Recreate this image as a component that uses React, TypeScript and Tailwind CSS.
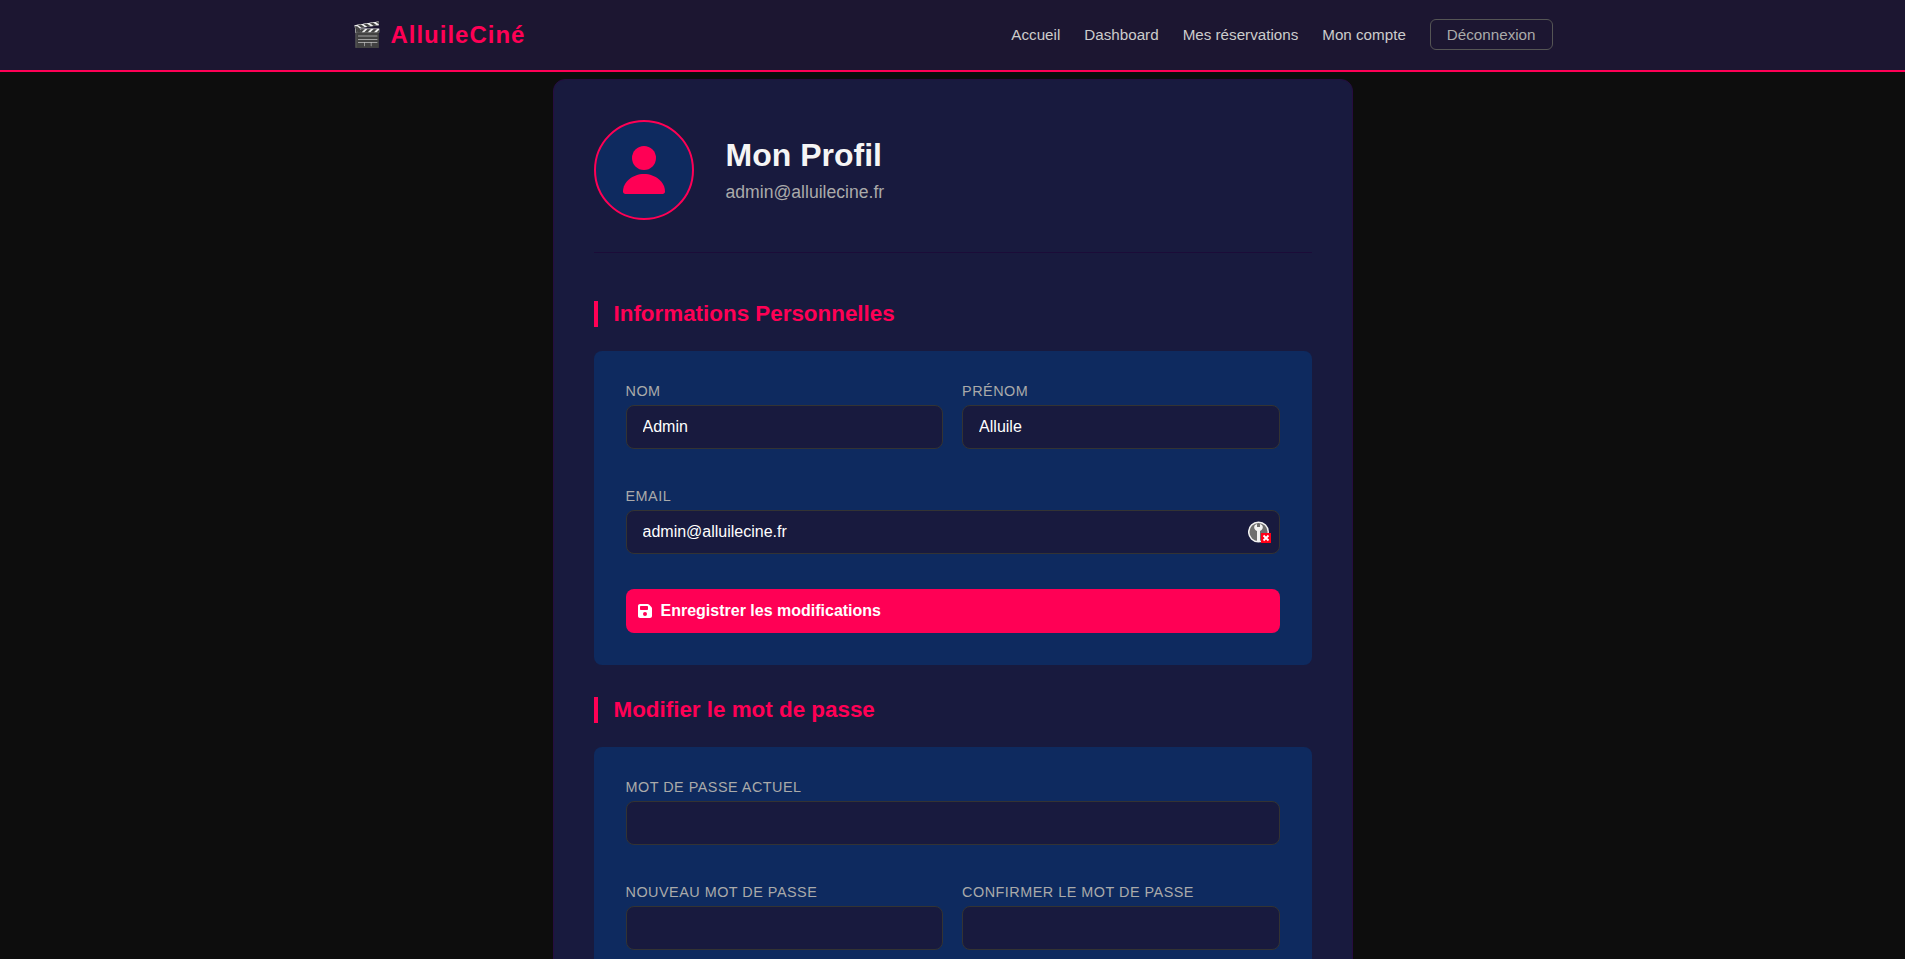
import type { JSX } from 'react';

const NAV_LINKS = ['Accueil', 'Dashboard', 'Mes réservations', 'Mon compte'];

function Field({ label, value, children }: { label: string; value?: string; children?: JSX.Element }): JSX.Element {
  return (
    <div className="min-w-0 flex-1">
      <label className="mb-[6px] block h-4 text-[14.4px] leading-4 tracking-[0.5px] text-[#aaaaaa] uppercase">{label}</label>
      <div className="relative">
        <input
          readOnly
          value={value ?? ''}
          className="h-11 w-full rounded-lg border border-[#333333] bg-[#181a3e] px-4 text-[16px] text-white outline-none"
        />
        {children}
      </div>
    </div>
  );
}

function KeyBadge(): JSX.Element {
  return (
    <svg className="absolute top-[11px] right-[9px]" width="23" height="23" viewBox="0 0 23 23">
      <circle cx="10.500" cy="11" r="9.800" fill="#6e6e6e" stroke="#f2f2f2" strokeWidth="1.500" />
      <path d="M7 4L9 3V6H12V3L14 4C15.500 6 15 8.500 12 10V20H9V10C6 8.500 5.500 6 7 4Z" fill="#f2f2f2" />
      <rect x="13" y="12" width="10" height="10" fill="#ff0018" />
      <path d="M15.500 14.500l5 5M20.500 14.500l-5 5" stroke="#fff" strokeWidth="1.800" />
    </svg>
  );
}

function SectionTitle({ children }: { children: string }): JSX.Element {
  return (
    <h2 className="mb-6 border-l-4 border-[#ff0055] pl-4 text-[22.4px] leading-[26px] font-bold text-[#ff0055]">{children}</h2>
  );
}

export default function App(): JSX.Element {
  return (
    <div className="h-screen overflow-hidden bg-[#0d0d0d] font-['Liberation_Sans',Arial,sans-serif]">
      <nav className="h-[72px] border-b-2 border-[#ff0055] bg-[#1c1631]">
        <div className="mx-auto flex h-[70px] w-[1200px] items-center justify-between">
          <a className="flex items-center gap-[7px] text-[24px] font-bold tracking-[1px] text-[#ff0055]">
            <span className="font-['Noto_Color_Emoji',sans-serif] text-[24px] leading-none font-normal">🎬</span>
            AlluileCiné
          </a>
          <div className="flex items-center gap-6">
            {NAV_LINKS.map((link) => (
              <a key={link} className="text-[15.2px] text-[#cccccc]">{link}</a>
            ))}
            <button type="button" className="mb-px h-[31px] rounded-md border border-[#555555] px-4 pt-px text-[15.2px] text-[#aaaaaa]">
              Déconnexion
            </button>
          </div>
        </div>
      </nav>

      <main className="mx-auto mt-[7px] w-[800px] rounded-xl border border-[#260d40] bg-[#181a3e] p-10">
        <header className="mb-12 flex items-center gap-8 border-b border-[#1b0c38] pb-8">
          <div className="flex h-[100px] w-[100px] items-center justify-center rounded-full border-2 border-[#ff0055] bg-[#0e2a5f]">
            <svg width="42" height="48" viewBox="0 0 42 48" fill="#ff0055">
              <circle cx="21" cy="12" r="12" />
              <path d="M21 28c-11.500 0-21 8-21 17.500 0 1.400 1 2.500 2.500 2.500h37c1.500 0 2.500-1.100 2.500-2.500C42 36 32.500 28 21 28Z" />
            </svg>
          </div>
          <div>
            <h1 className="mb-2 text-[32px] leading-[37px] font-bold text-[#f5f5f5]">Mon Profil</h1>
            <p className="text-[17.6px] leading-[21px] text-[#aaaaaa]">admin@alluilecine.fr</p>
          </div>
        </header>

        <SectionTitle>Informations Personnelles</SectionTitle>
        <section className="mb-8 rounded-lg bg-[#0e2a5f] p-8">
          <div className="mb-[39px] flex gap-[19.2px]">
            <Field label="Nom" value="Admin" />
            <Field label="Prénom" value="Alluile" />
          </div>
          <div className="mb-[35px] flex">
            <Field label="Email" value="admin@alluilecine.fr">
              <KeyBadge />
            </Field>
          </div>
          <button type="button" className="flex h-11 w-full items-center gap-[9px] rounded-lg bg-[#ff0055] px-3 text-[16px] font-bold text-white">
            <svg width="14" height="16" viewBox="0 0 448 512" fill="#fff">
              <path d="M64 32C28.700 32 0 60.700 0 96v320c0 35.300 28.700 64 64 64h320c35.300 0 64-28.700 64-64V173.300c0-17-6.700-33.300-18.700-45.300L352 50.700C340 38.700 323.700 32 306.700 32H64zm0 96c0-17.700 14.300-32 32-32h192c17.700 0 32 14.300 32 32v64c0 17.700-14.300 32-32 32H96c-17.700 0-32-14.300-32-32v-64zm160 160a64 64 0 1 1 0 128 64 64 0 1 1 0-128z" />
            </svg>
            Enregistrer les modifications
          </button>
        </section>

        <SectionTitle>Modifier le mot de passe</SectionTitle>
        <section className="rounded-lg bg-[#0e2a5f] p-8">
          <div className="mb-[39px] flex">
            <Field label="Mot de passe actuel" />
          </div>
          <div className="mb-[39px] flex gap-[19.2px]">
            <Field label="Nouveau mot de passe" />
            <Field label="Confirmer le mot de passe" />
          </div>
        </section>
      </main>
    </div>
  );
}
